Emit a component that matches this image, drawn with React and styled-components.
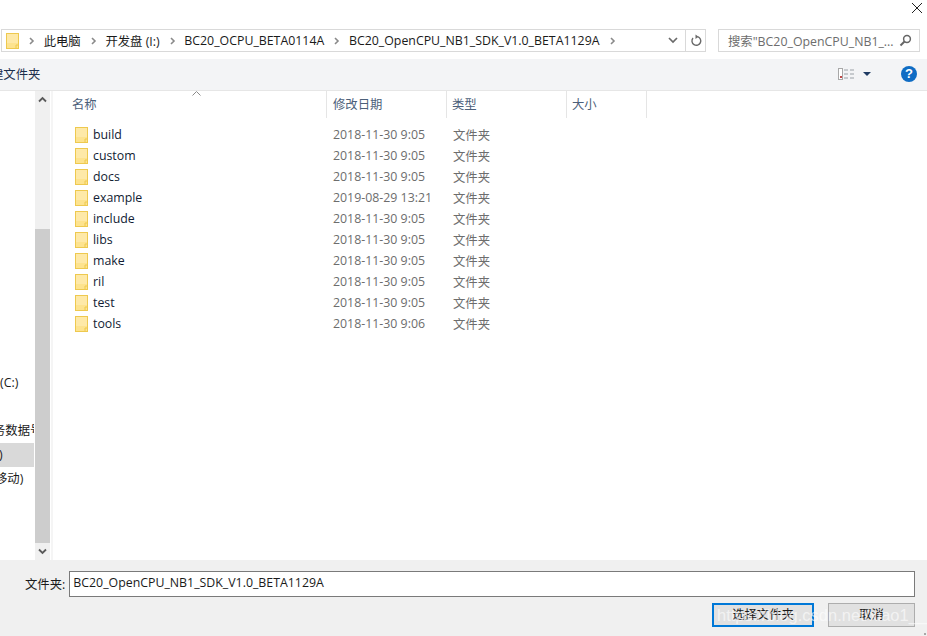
import styled, { createGlobalStyle } from "styled-components";

const files = [
  ["build", "2018-11-30 9:05"],
  ["custom", "2018-11-30 9:05"],
  ["docs", "2018-11-30 9:05"],
  ["example", "2019-08-29 13:21"],
  ["include", "2018-11-30 9:05"],
  ["libs", "2018-11-30 9:05"],
  ["make", "2018-11-30 9:05"],
  ["ril", "2018-11-30 9:05"],
  ["test", "2018-11-30 9:05"],
  ["tools", "2018-11-30 9:06"],
];

const crumbs = ["此电脑", "开发盘 (I:)", "BC20_OCPU_BETA0114A", "BC20_OpenCPU_NB1_SDK_V1.0_BETA1129A"];

const Global = createGlobalStyle`
  html, body { margin: 0; padding: 0; background: #fff; }
  * { box-sizing: border-box; }
`;

function Folder() {
  return (
    <svg width="13" height="16" viewBox="0 0 13 16" style={{ flex: "none" }}>
      <rect x="0.5" y="0.5" width="12" height="15" fill="#fde38f" stroke="#eec94f" />
      <path d="M1 1h11v9H1z" fill="#fee9a8" />
      <path d="M10 15.5v-3.5h2.5" fill="none" stroke="#eec94f" />
    </svg>
  );
}

function Chevron() {
  return (
    <svg width="6" height="8" viewBox="0 0 6 8" style={{ flex: "none" }}>
      <path d="M1 1l3 3-3 3" fill="none" stroke="#8a8a8a" strokeWidth="1.6" />
    </svg>
  );
}

function ScrollArrow({ up }) {
  return (
    <svg width="9" height="7" viewBox="0 0 9 7">
      <path d={up ? "M1 5.5l3.5-3.5 3.5 3.5" : "M1 1.5l3.5 3.5 3.5-3.5"} fill="none" stroke="#5a5a5a" strokeWidth="1.8" />
    </svg>
  );
}

export default function App() {
  return (
    <Page>
      <Global />
      <TitleBar>
        <svg width="12" height="12" viewBox="0 0 12 12">
          <path d="M1 1l10 10M11 1L1 11" stroke="#222" strokeWidth="1" />
        </svg>
      </TitleBar>
      <AddressRow>
        <AddressBox>
          <Folder />
          {crumbs.map((c) => (
            <Crumb key={c}>
              <Chevron />
              <span>{c}</span>
            </Crumb>
          ))}
          <LastChevron>
            <Chevron />
          </LastChevron>
          <AddressEnd>
            <svg width="10" height="7" viewBox="0 0 10 7">
              <path d="M1 1l4 4 4-4" fill="none" stroke="#6a6a6a" strokeWidth="1.7" />
            </svg>
          </AddressEnd>
          <RefreshCell>
            <svg width="12" height="13" viewBox="0 0 12 13">
              <path d="M7.5 2.6A4.4 4.4 0 1 1 3 4" fill="none" stroke="#6a6a6a" strokeWidth="1.4" />
              <path d="M5.5 0.5v4.5l3-2.2z" fill="#6a6a6a" />
            </svg>
          </RefreshCell>
        </AddressBox>
        <SearchBox>
          <span>搜索"BC20_OpenCPU_NB1_...</span>
          <svg width="13" height="13" viewBox="0 0 13 13">
            <circle cx="8" cy="5" r="3.4" fill="none" stroke="#666" strokeWidth="1.5" />
            <path d="M5.5 7.5L1.5 11.5" stroke="#666" strokeWidth="2" />
          </svg>
        </SearchBox>
      </AddressRow>
      <Toolbar>
        <NewFolder>建文件夹</NewFolder>
        <ToolIcons>
          <svg width="16" height="12" viewBox="0 0 16 12">
            <rect x="0.5" y="0.5" width="4" height="11" fill="#fff" stroke="#a8a8a8" />
            <rect x="2" y="8" width="2" height="2" fill="#c04848" />
            <path d="M6 2h4M12 2h4M6 6h4M12 6h4M6 10h4M12 10h4" stroke="#9aa0a6" strokeWidth="1" />
          </svg>
          <ViewCaret>
            <svg width="8" height="4" viewBox="0 0 8 4">
              <path d="M0 0h8L4 4z" fill="#1f3a63" />
            </svg>
          </ViewCaret>
          <HelpIcon>?</HelpIcon>
        </ToolIcons>
      </Toolbar>
      <Main>
        <Sidebar>
          <NavList>
            <NavItem>(C:)</NavItem>
            <NavItem />
            <NavItem $shift={-7}>务数据号</NavItem>
            <NavItem $selected $shift={-1}>)</NavItem>
            <NavItem $shift={-5}>移动)</NavItem>
          </NavList>
        </Sidebar>
        <Scrollbar>
          <ScrollButton><ScrollArrow up /></ScrollButton>
          <ScrollSpace />
          <ScrollThumb />
          <ScrollButton><ScrollArrow /></ScrollButton>
        </Scrollbar>
        <FileArea>
          <HeaderRow>
            <SortCaret>
              <svg width="9" height="5" viewBox="0 0 9 5">
                <path d="M0.5 4.5l4-4 4 4" fill="none" stroke="#8a8a8a" />
              </svg>
            </SortCaret>
            <HeaderCell $w={274} $pl={19}>名称</HeaderCell>
            <HeaderCell $w={120} $pl={6}>修改日期</HeaderCell>
            <HeaderCell $w={120} $pl={5}>类型</HeaderCell>
            <HeaderCell $w={80} $pl={5}>大小</HeaderCell>
          </HeaderRow>
          <Rows>
            {files.map(([name, date]) => (
              <Row key={name}>
                <NameCell>
                  <Folder />
                  <span>{name}</span>
                </NameCell>
                <MetaCell $w={120}>{date}</MetaCell>
                <MetaCell $w={120}>文件夹</MetaCell>
              </Row>
            ))}
          </Rows>
        </FileArea>
      </Main>
      <Footer>
        <FolderRow>
          <FolderLabel>文件夹:</FolderLabel>
          <FolderInput>BC20_OpenCPU_NB1_SDK_V1.0_BETA1129A</FolderInput>
        </FolderRow>
        <Buttons>
          <DialogButton $primary>选择文件夹</DialogButton>
          <DialogButton>取消</DialogButton>
        </Buttons>
        <Watermark>https://blog.csdn.net/xiao1__</Watermark>
        <Grip />
      </Footer>
    </Page>
  );
}

const Page = styled.div`
  width: 927px;
  height: 636px;
  overflow: hidden;
  display: flex;
  flex-direction: column;
  background: #fff;
  color: #1a1a1a;
  font-family: "Open Sans", "Noto Sans CJK SC", sans-serif;
  font-size: 12.35px;
`;

const TitleBar = styled.div`
  height: 29px;
  flex: none;
  display: flex;
  justify-content: flex-end;
  padding: 2px 4px 0 0;
`;

const AddressRow = styled.div`
  height: 30px;
  flex: none;
  display: flex;
  gap: 12px;
  padding: 0 7px 7px 1px;
`;

const AddressBox = styled.div`
  width: 705px;
  height: 23px;
  display: flex;
  align-items: center;
  padding-left: 4px;
  border: 1px solid #d9d9d9;
`;

const Crumb = styled.div`
  display: flex;
  align-items: center;
  gap: 8.7px;
  margin-left: 10px;
  white-space: nowrap;
`;

const LastChevron = styled.div`
  margin-left: 10px;
  line-height: 0;
`;

const AddressEnd = styled.div`
  margin-left: auto;
  width: 24px;
  display: flex;
  justify-content: center;
`;

const RefreshCell = styled.div`
  width: 20px;
  height: 100%;
  display: flex;
  align-items: center;
  justify-content: center;
  border-left: 1px solid #d9d9d9;
`;

const SearchBox = styled.div`
  flex: 1;
  height: 23px;
  display: flex;
  align-items: center;
  justify-content: space-between;
  padding: 0 7px 0 9px;
  border: 1px solid #d9d9d9;
  color: #6d6d6d;
  white-space: nowrap;
  overflow: hidden;
`;

const Toolbar = styled.div`
  height: 32px;
  flex: none;
  display: flex;
  align-items: center;
  justify-content: space-between;
  background: #f3f4f6;
  border-bottom: 1px solid #e6e6e6;
  padding: 0 10px 2px 0;
`;

const NewFolder = styled.div`
  margin-left: -9px;
  color: #1c2f4d;
`;

const ToolIcons = styled.div`
  display: flex;
  align-items: center;
`;

const ViewCaret = styled.div`
  margin-left: 9px;
  line-height: 0;
`;

const HelpIcon = styled.div`
  width: 16px;
  height: 16px;
  margin-left: 30px;
  border-radius: 50%;
  background: #0f6cc4;
  color: #fff;
  font: bold 13px/16px "Liberation Sans", sans-serif;
  text-align: center;
`;

const Main = styled.div`
  flex: 1;
  min-height: 0;
  display: flex;
`;

const Sidebar = styled.div`
  width: 34px;
  flex: none;
  overflow: hidden;
`;

const NavList = styled.div`
  padding-top: 280px;
  display: flex;
  flex-direction: column;
`;

const NavItem = styled.div`
  height: 24px;
  line-height: 24px;
  white-space: nowrap;
  overflow: hidden;
  text-indent: ${(p) => p.$shift || 0}px;
  background: ${(p) => (p.$selected ? "#d9d9d9" : "transparent")};
`;

const Scrollbar = styled.div`
  width: 15px;
  flex: none;
  margin-left: 1px;
  display: flex;
  flex-direction: column;
  background: #f0f0f0;
`;

const ScrollButton = styled.div`
  height: 17px;
  flex: none;
  display: flex;
  align-items: center;
  justify-content: center;
`;

const ScrollSpace = styled.div`
  height: 121px;
  flex: none;
`;

const ScrollThumb = styled.div`
  flex: 1;
  background: #cdcdcd;
`;

const FileArea = styled.div`
  flex: 1;
  min-width: 0;
  margin-left: 1px;
  border-left: 2px solid #f5f5f5;
`;

const HeaderRow = styled.div`
  position: relative;
  height: 27px;
  display: flex;
  color: #4c607a;
`;

const SortCaret = styled.div`
  position: absolute;
  left: 139px;
  top: 0;
  line-height: 0;
`;

const HeaderCell = styled.div`
  width: ${(p) => p.$w}px;
  padding-left: ${(p) => p.$pl}px;
  line-height: 27px;
  border-right: 1px solid #e5e5e5;
`;

const Rows = styled.div`
  padding-top: 6px;
`;

const Row = styled.div`
  height: 21px;
  display: flex;
  align-items: center;
`;

const NameCell = styled.div`
  width: 274px;
  padding-left: 22px;
  display: flex;
  align-items: center;
  gap: 5px;
  color: #111c33;
`;

const MetaCell = styled.div`
  width: ${(p) => p.$w}px;
  padding-left: 6px;
  color: #6d6d6d;
`;

const Footer = styled.div`
  position: relative;
  height: 76px;
  flex: none;
  background: #f0f0f0;
  padding: 11px 12px 0 25px;
`;

const FolderRow = styled.div`
  display: flex;
  align-items: center;
  gap: 4px;
`;

const FolderLabel = styled.div`
  white-space: nowrap;
`;

const FolderInput = styled.div`
  flex: 1;
  height: 26px;
  line-height: 22px;
  padding-left: 3px;
  background: #fff;
  border: 1px solid #7a7a7a;
`;

const Buttons = styled.div`
  display: flex;
  justify-content: flex-end;
  gap: 14px;
  margin-top: 6px;
`;

const DialogButton = styled.div`
  width: ${(p) => (p.$primary ? "102px" : "87px")};
  height: 24px;
  line-height: ${(p) => (p.$primary ? "20px" : "22px")};
  text-align: center;
  background: #e1e1e1;
  border: ${(p) => (p.$primary ? "2px solid #0078d7" : "1px solid #adadad")};
`;

const Watermark = styled.div`
  position: absolute;
  left: 717px;
  top: 46px;
  font: 16.5px "Liberation Sans", sans-serif;
  color: rgba(255, 255, 255, 0.6);
  white-space: nowrap;
  pointer-events: none;
`;

const Grip = styled.div`
  position: absolute;
  right: 1px;
  bottom: 1px;
  width: 2px;
  height: 2px;
  background: #a8a8a8;
`;
